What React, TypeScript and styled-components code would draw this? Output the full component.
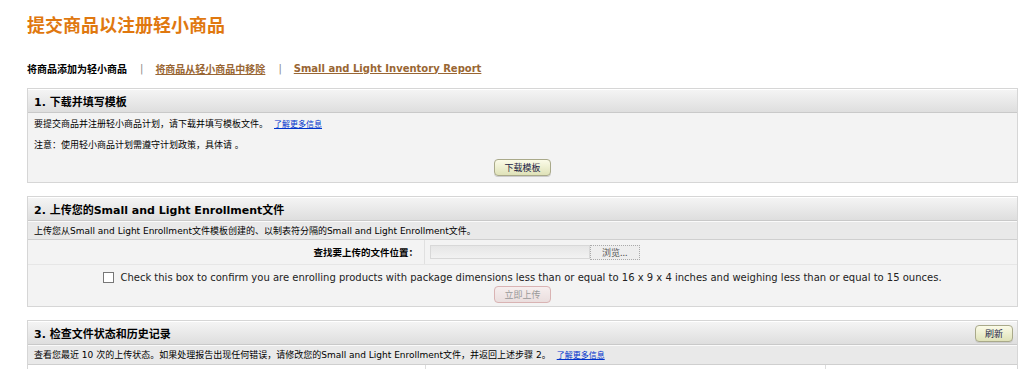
import React from 'react'
import styled, { createGlobalStyle, css } from 'styled-components'

const GlobalStyle = createGlobalStyle`
  html, body {
    margin: 0;
    padding: 0;
    background: #ffffff;
  }
  body {
    font-family: 'DejaVu Sans', 'Noto Sans CJK SC', sans-serif;
    color: #000;
  }
`

const Page = styled.div`
  padding: 12px 6px 0 27px;
`

const Title = styled.h1`
  margin: 0;
  font-size: 18px;
  line-height: 24px;
  font-weight: bold;
  color: #e0780f;
  font-family: 'Noto Sans CJK SC', sans-serif;
`

const Tabs = styled.div`
  display: flex;
  align-items: center;
  margin-top: 25px;
  height: 14px;
  font-size: 10px;
  font-weight: bold;
`

const Tab = styled.span<{ $link?: boolean }>`
  color: #000;
  ${(p) =>
    p.$link &&
    css`
      color: #996633;
      text-decoration: underline;
    `}
`

const Sep = styled.span`
  color: #888;
  font-weight: normal;
  margin: 0 12px 0 13px;
`

const Panel = styled.section`
  margin-top: 13px;
  border: 1px solid #d6d6d6;
  background: #f3f3f3;
`

const Header = styled.div`
  display: flex;
  align-items: center;
  justify-content: space-between;
  height: 22px;
  padding: 0 4px 0 6px;
  background: linear-gradient(#f4f4f4, #dedede);
  border-top: 1px solid #fff;
  border-bottom: 1px solid #c9c9c9;
  font-size: 11px;
  font-weight: bold;
`

const Desc = styled.div`
  padding: 3px 6px 2px;
  font-size: 9px;
  line-height: 12px;
  background: #e9e9e9;
  border-top: 1px solid #fafafa;
  border-bottom: 1px solid #cfcfcf;
`

const Body = styled.div`
  padding: 5px 6px 6px;
  font-size: 9px;
  line-height: 12px;
`

const Line = styled.p`
  margin: 0 0 8px;
`

const Link = styled.a`
  color: #0033cc;
  text-decoration: underline;
  font-size: 8px;
  margin-left: 6px;
`

const Center = styled.div`
  display: flex;
  justify-content: center;
`

const Button = styled.button<{ $disabled?: boolean; $plain?: boolean }>`
  font-family: 'Noto Sans CJK SC', serif;
  font-size: 9px;
  line-height: 11px;
  padding: 2px 9px;
  border: 1px solid #a9a98a;
  border-radius: 4px;
  background: linear-gradient(#fbfbe8, #dfe2b8);
  color: #222244;
  box-shadow: 0 1px 0 #ccc;
  ${(p) =>
    p.$disabled &&
    css`
      border-color: #d9b3b3;
      background: linear-gradient(#f6eeee, #eadede);
      color: #999;
      box-shadow: none;
    `}
  ${(p) =>
    p.$plain &&
    css`
      border: 1px dotted #aaa;
      border-radius: 0;
      background: #eeeeee;
      color: #555;
      box-shadow: none;
      padding: 1px 11px;
    `}
`

const FormRow = styled.div`
  display: grid;
  grid-template-columns: 397px 1fr;
  border-bottom: 1px solid #e6e6e6;
  height: 24px;
`

const Label = styled.div`
  display: flex;
  align-items: center;
  justify-content: flex-end;
  padding-right: 6px;
  font-size: 9.5px;
  font-weight: bold;
  border-right: 1px solid #e0e0e0;
`

const Field = styled.div`
  display: flex;
  align-items: center;
  padding-left: 5px;
`

const FileBox = styled.div`
  width: 158px;
  height: 12px;
  border: 1px solid #d8d8d8;
  background: linear-gradient(#e6e6e6, #f2f2f2);
`

const CheckRow = styled.label`
  display: flex;
  align-items: center;
  justify-content: center;
  gap: 6px;
  margin-top: 6px;
  height: 12px;
  font-size: 10px;
  color: #222;
`

const Box = styled.span`
  width: 9px;
  height: 9px;
  border: 1px solid #777;
  background: #fff;
`

const Actions = styled.div`
  display: flex;
  justify-content: center;
  padding: 3px 0 3px;
`

const Table = styled.div`
  display: grid;
  grid-template-columns: 397px 400px 1fr;
  height: 10px;
  background: #fff;
  & > div + div {
    border-left: 1px solid #ddd;
  }
`

export default function App() {
  return (
    <>
      <GlobalStyle />
      <Page>
        <Title>提交商品以注册轻小商品</Title>
        <Tabs>
          <Tab>将商品添加为轻小商品</Tab>
          <Sep>|</Sep>
          <Tab $link>将商品从轻小商品中移除</Tab>
          <Sep>|</Sep>
          <Tab $link>Small and Light Inventory Report</Tab>
        </Tabs>

        <Panel>
          <Header>1. 下载并填写模板</Header>
          <Body>
            <Line>
              要提交商品并注册轻小商品计划，请下载并填写模板文件。
              <Link>了解更多信息</Link>
            </Line>
            <Line>注意：使用轻小商品计划需遵守计划政策，具体请 。</Line>
            <Center>
              <Button>下载模板</Button>
            </Center>
          </Body>
        </Panel>

        <Panel>
          <Header>2. 上传您的Small and Light Enrollment文件</Header>
          <Desc>
            上传您从Small and Light Enrollment文件模板创建的、以制表符分隔的Small and Light Enrollment文件。
          </Desc>
          <FormRow>
            <Label>查找要上传的文件位置：</Label>
            <Field>
              <FileBox />
              <Button $plain>浏览...</Button>
            </Field>
          </FormRow>
          <CheckRow>
            <Box />
            Check this box to confirm you are enrolling products with package dimensions less than or equal to 16 x 9 x 4 inches and weighing less than or equal to 15 ounces.
          </CheckRow>
          <Actions>
            <Button $disabled>立即上传</Button>
          </Actions>
        </Panel>

        <Panel>
          <Header>
            3. 检查文件状态和历史记录
            <Button>刷新</Button>
          </Header>
          <Desc>
            查看您最近 10 次的上传状态。如果处理报告出现任何错误，请修改您的Small and Light Enrollment文件，并返回上述步骤 2。
            <Link>了解更多信息</Link>
          </Desc>
          <Table>
            <div />
            <div />
            <div />
          </Table>
        </Panel>
      </Page>
    </>
  )
}
